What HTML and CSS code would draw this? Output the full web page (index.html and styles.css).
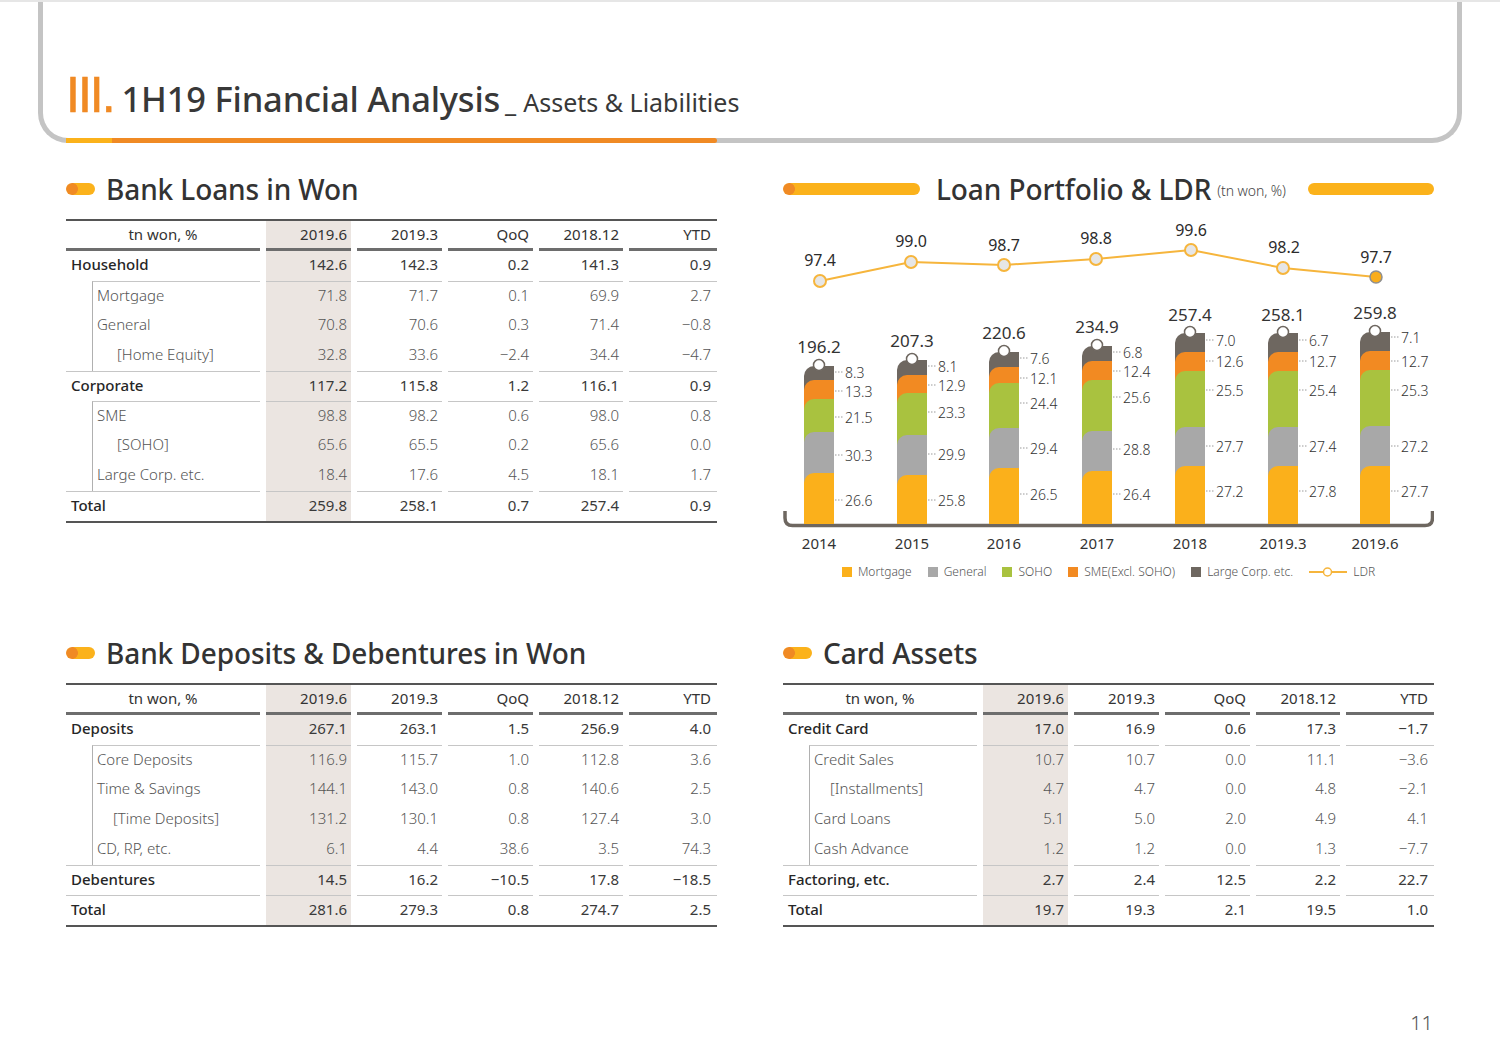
FILE: index.html
```html
<!DOCTYPE html>
<html lang="en">
<head>
<meta charset="utf-8">
<title>1H19 Financial Analysis - Assets &amp; Liabilities</title>
<link rel="stylesheet" href="styles.css">
</head>
<body>
<div class="page">
  <header class="frame">
    <div class="title">
      <span class="roman">III.</span>
      <span class="t-main">1H19 Financial Analysis</span>
      <span class="t-sub"><span class="us">_</span>Assets &amp; Liabilities</span>
    </div>
    <span class="accent"></span>
  </header>

  <main class="main">
    <section class="sec">
      <h2 class="sec-h"><span class="pill"></span>Bank Loans in Won</h2>
      <div class="tbl">
        <table>
          <colgroup><col class="w-l"><col class="w-a"><col class="w-a"><col class="w-a"><col class="w-b"><col class="w-c"></colgroup>
          <thead><tr><th class="lbl">tn won, %</th><th class="hl">2019.6</th><th>2019.3</th><th>QoQ</th><th>2018.12</th><th>YTD</th></tr></thead>
          <tbody>
            <tr class="b"><td class="lbl">Household</td><td class="hl">142.6</td><td>142.3</td><td>0.2</td><td>141.3</td><td>0.9</td></tr>
            <tr class="s gs"><td class="lbl in"><div class="ind">Mortgage</div></td><td class="hl">71.8</td><td>71.7</td><td>0.1</td><td>69.9</td><td>2.7</td></tr>
            <tr class="s"><td class="lbl in"><div class="ind">General</div></td><td class="hl">70.8</td><td>70.6</td><td>0.3</td><td>71.4</td><td>−0.8</td></tr>
            <tr class="s"><td class="lbl in"><div class="ind l2">[Home Equity]</div></td><td class="hl">32.8</td><td>33.6</td><td>−2.4</td><td>34.4</td><td>−4.7</td></tr>
            <tr class="b sep"><td class="lbl">Corporate</td><td class="hl">117.2</td><td>115.8</td><td>1.2</td><td>116.1</td><td>0.9</td></tr>
            <tr class="s gs"><td class="lbl in"><div class="ind">SME</div></td><td class="hl">98.8</td><td>98.2</td><td>0.6</td><td>98.0</td><td>0.8</td></tr>
            <tr class="s"><td class="lbl in"><div class="ind l2">[SOHO]</div></td><td class="hl">65.6</td><td>65.5</td><td>0.2</td><td>65.6</td><td>0.0</td></tr>
            <tr class="s"><td class="lbl in"><div class="ind">Large Corp. etc.</div></td><td class="hl">18.4</td><td>17.6</td><td>4.5</td><td>18.1</td><td>1.7</td></tr>
            <tr class="b sep"><td class="lbl">Total</td><td class="hl">259.8</td><td>258.1</td><td>0.7</td><td>257.4</td><td>0.9</td></tr>
          </tbody>
        </table>
      </div>
    </section>

    <section class="sec">
      <h2 class="sec-h chart-h"><span class="bar-l"></span><span class="ttl">Loan Portfolio &amp; LDR</span><span class="unit">(tn won, %)</span><span class="bar-r"></span></h2>
      <svg class="chart" width="651" height="353" viewBox="783 207 651 353" xmlns="http://www.w3.org/2000/svg">
        <path class="axis" d="M785 511V518Q785 525.5 792.5 525.5H1425Q1432.5 525.5 1432.5 518V511"/>

        <g transform="translate(804 0)">
          <path class="c5" d="M0 524V376A10 10 0 0 1 10 366H30V524Z"/>
          <path class="c4" d="M0 524V390A10 10 0 0 1 10 380H30V524Z"/>
          <path class="c3" d="M0 524V409A10 10 0 0 1 10 399H30V524Z"/>
          <path class="c2" d="M0 524V442A10 10 0 0 1 10 432H30V524Z"/>
          <path class="c1" d="M0 524V483A10 10 0 0 1 10 473H30V524Z"/>
          <circle class="knob" cx="15" cy="365" r="5.5"/>
          <path class="lead" d="M31 372H40M31 391H40M31 417H40M31 455H40M31 500H40"/>
          <text class="seg" x="41" y="372">8.3</text><text class="seg" x="41" y="391">13.3</text><text class="seg" x="41" y="417">21.5</text><text class="seg" x="41" y="455">30.3</text><text class="seg" x="41" y="500">26.6</text>
          <text class="tot" x="15" y="346">196.2</text>
          <text class="yr" x="15" y="543">2014</text>
        </g>
        <g transform="translate(897 0)">
          <path class="c5" d="M0 524V370A10 10 0 0 1 10 360H30V524Z"/>
          <path class="c4" d="M0 524V385A10 10 0 0 1 10 375H30V524Z"/>
          <path class="c3" d="M0 524V403A10 10 0 0 1 10 393H30V524Z"/>
          <path class="c2" d="M0 524V445A10 10 0 0 1 10 435H30V524Z"/>
          <path class="c1" d="M0 524V485A10 10 0 0 1 10 475H30V524Z"/>
          <circle class="knob" cx="15" cy="359" r="5.5"/>
          <path class="lead" d="M31 366H40M31 385H40M31 412H40M31 454H40M31 500H40"/>
          <text class="seg" x="41" y="366">8.1</text><text class="seg" x="41" y="385">12.9</text><text class="seg" x="41" y="412">23.3</text><text class="seg" x="41" y="454">29.9</text><text class="seg" x="41" y="500">25.8</text>
          <text class="tot" x="15" y="340">207.3</text>
          <text class="yr" x="15" y="543">2015</text>
        </g>
        <g transform="translate(989 0)">
          <path class="c5" d="M0 524V362A10 10 0 0 1 10 352H30V524Z"/>
          <path class="c4" d="M0 524V377A10 10 0 0 1 10 367H30V524Z"/>
          <path class="c3" d="M0 524V393A10 10 0 0 1 10 383H30V524Z"/>
          <path class="c2" d="M0 524V438A10 10 0 0 1 10 428H30V524Z"/>
          <path class="c1" d="M0 524V478A10 10 0 0 1 10 468H30V524Z"/>
          <circle class="knob" cx="15" cy="351" r="5.5"/>
          <path class="lead" d="M31 358H40M31 378H40M31 403H40M31 448H40M31 494H40"/>
          <text class="seg" x="41" y="358">7.6</text><text class="seg" x="41" y="378">12.1</text><text class="seg" x="41" y="403">24.4</text><text class="seg" x="41" y="448">29.4</text><text class="seg" x="41" y="494">26.5</text>
          <text class="tot" x="15" y="332">220.6</text>
          <text class="yr" x="15" y="543">2016</text>
        </g>
        <g transform="translate(1082 0)">
          <path class="c5" d="M0 524V356A10 10 0 0 1 10 346H30V524Z"/>
          <path class="c4" d="M0 524V371A10 10 0 0 1 10 361H30V524Z"/>
          <path class="c3" d="M0 524V390A10 10 0 0 1 10 380H30V524Z"/>
          <path class="c2" d="M0 524V441A10 10 0 0 1 10 431H30V524Z"/>
          <path class="c1" d="M0 524V481A10 10 0 0 1 10 471H30V524Z"/>
          <circle class="knob" cx="15" cy="345" r="5.5"/>
          <path class="lead" d="M31 352H40M31 371H40M31 397H40M31 449H40M31 494H40"/>
          <text class="seg" x="41" y="352">6.8</text><text class="seg" x="41" y="371">12.4</text><text class="seg" x="41" y="397">25.6</text><text class="seg" x="41" y="449">28.8</text><text class="seg" x="41" y="494">26.4</text>
          <text class="tot" x="15" y="326">234.9</text>
          <text class="yr" x="15" y="543">2017</text>
        </g>
        <g transform="translate(1175 0)">
          <path class="c5" d="M0 524V343A10 10 0 0 1 10 333H30V524Z"/>
          <path class="c4" d="M0 524V362A10 10 0 0 1 10 352H30V524Z"/>
          <path class="c3" d="M0 524V381A10 10 0 0 1 10 371H30V524Z"/>
          <path class="c2" d="M0 524V437A10 10 0 0 1 10 427H30V524Z"/>
          <path class="c1" d="M0 524V476A10 10 0 0 1 10 466H30V524Z"/>
          <circle class="knob" cx="15" cy="332" r="5.5"/>
          <path class="lead" d="M31 340H40M31 361H40M31 390H40M31 446H40M31 491H40"/>
          <text class="seg" x="41" y="340">7.0</text><text class="seg" x="41" y="361">12.6</text><text class="seg" x="41" y="390">25.5</text><text class="seg" x="41" y="446">27.7</text><text class="seg" x="41" y="491">27.2</text>
          <text class="tot" x="15" y="314">257.4</text>
          <text class="yr" x="15" y="543">2018</text>
        </g>
        <g transform="translate(1268 0)">
          <path class="c5" d="M0 524V343A10 10 0 0 1 10 333H30V524Z"/>
          <path class="c4" d="M0 524V362A10 10 0 0 1 10 352H30V524Z"/>
          <path class="c3" d="M0 524V381A10 10 0 0 1 10 371H30V524Z"/>
          <path class="c2" d="M0 524V437A10 10 0 0 1 10 427H30V524Z"/>
          <path class="c1" d="M0 524V476A10 10 0 0 1 10 466H30V524Z"/>
          <circle class="knob" cx="15" cy="332" r="5.5"/>
          <path class="lead" d="M31 340H40M31 361H40M31 390H40M31 446H40M31 491H40"/>
          <text class="seg" x="41" y="340">6.7</text><text class="seg" x="41" y="361">12.7</text><text class="seg" x="41" y="390">25.4</text><text class="seg" x="41" y="446">27.4</text><text class="seg" x="41" y="491">27.8</text>
          <text class="tot" x="15" y="314">258.1</text>
          <text class="yr" x="15" y="543">2019.3</text>
        </g>
        <g transform="translate(1360 0)">
          <path class="c5" d="M0 524V342A10 10 0 0 1 10 332H30V524Z"/>
          <path class="c4" d="M0 524V361A10 10 0 0 1 10 351H30V524Z"/>
          <path class="c3" d="M0 524V380A10 10 0 0 1 10 370H30V524Z"/>
          <path class="c2" d="M0 524V436A10 10 0 0 1 10 426H30V524Z"/>
          <path class="c1" d="M0 524V476A10 10 0 0 1 10 466H30V524Z"/>
          <circle class="knob" cx="15" cy="331" r="5.5"/>
          <path class="lead" d="M31 337H40M31 361H40M31 390H40M31 446H40M31 491H40"/>
          <text class="seg" x="41" y="337">7.1</text><text class="seg" x="41" y="361">12.7</text><text class="seg" x="41" y="390">25.3</text><text class="seg" x="41" y="446">27.2</text><text class="seg" x="41" y="491">27.7</text>
          <text class="tot" x="15" y="312">259.8</text>
          <text class="yr" x="15" y="543">2019.6</text>
        </g>

        <polyline class="ldr" points="820,281 911,262 1004,265 1096,259 1191,250 1283,268 1376,277"/>
        <circle class="pt" cx="820" cy="281" r="6"/>
        <circle class="pt" cx="911" cy="262" r="6"/>
        <circle class="pt" cx="1004" cy="265" r="6"/>
        <circle class="pt" cx="1096" cy="259" r="6"/>
        <circle class="pt" cx="1191" cy="250" r="6"/>
        <circle class="pt" cx="1283" cy="268" r="6"/>
        <circle class="pt last" cx="1376" cy="277" r="6"/>
        <text class="ldr-t" x="820" y="260">97.4</text>
        <text class="ldr-t" x="911" y="241">99.0</text>
        <text class="ldr-t" x="1004" y="245">98.7</text>
        <text class="ldr-t" x="1096" y="238">98.8</text>
        <text class="ldr-t" x="1191" y="230">99.6</text>
        <text class="ldr-t" x="1284" y="247">98.2</text>
        <text class="ldr-t" x="1376" y="257">97.7</text>
      </svg>
      <div class="legend">
        <span class="li"><span class="sw c1b"></span>Mortgage</span>
        <span class="li"><span class="sw c2b"></span>General</span>
        <span class="li"><span class="sw c3b"></span>SOHO</span>
        <span class="li"><span class="sw c4b"></span>SME(Excl. SOHO)</span>
        <span class="li"><span class="sw c5b"></span>Large Corp. etc.</span>
        <span class="li"><svg class="lg-ldr" width="38" height="10" viewBox="0 0 38 10"><path d="M0 5H38"/><circle cx="18.5" cy="5" r="4"/></svg>LDR</span>
      </div>
    </section>

    <section class="sec">
      <h2 class="sec-h"><span class="pill"></span>Bank Deposits &amp; Debentures in Won</h2>
      <div class="tbl">
        <table>
          <colgroup><col class="w-l"><col class="w-a"><col class="w-a"><col class="w-a"><col class="w-b"><col class="w-c"></colgroup>
          <thead><tr><th class="lbl">tn won, %</th><th class="hl">2019.6</th><th>2019.3</th><th>QoQ</th><th>2018.12</th><th>YTD</th></tr></thead>
          <tbody>
            <tr class="b"><td class="lbl">Deposits</td><td class="hl">267.1</td><td>263.1</td><td>1.5</td><td>256.9</td><td>4.0</td></tr>
            <tr class="s gs"><td class="lbl in"><div class="ind">Core Deposits</div></td><td class="hl">116.9</td><td>115.7</td><td>1.0</td><td>112.8</td><td>3.6</td></tr>
            <tr class="s"><td class="lbl in"><div class="ind">Time &amp; Savings</div></td><td class="hl">144.1</td><td>143.0</td><td>0.8</td><td>140.6</td><td>2.5</td></tr>
            <tr class="s"><td class="lbl in"><div class="ind l2s">[Time Deposits]</div></td><td class="hl">131.2</td><td>130.1</td><td>0.8</td><td>127.4</td><td>3.0</td></tr>
            <tr class="s"><td class="lbl in"><div class="ind">CD, RP, etc.</div></td><td class="hl">6.1</td><td>4.4</td><td>38.6</td><td>3.5</td><td>74.3</td></tr>
            <tr class="b sep"><td class="lbl">Debentures</td><td class="hl">14.5</td><td>16.2</td><td>−10.5</td><td>17.8</td><td>−18.5</td></tr>
            <tr class="b sep"><td class="lbl">Total</td><td class="hl">281.6</td><td>279.3</td><td>0.8</td><td>274.7</td><td>2.5</td></tr>
          </tbody>
        </table>
      </div>
    </section>

    <section class="sec">
      <h2 class="sec-h"><span class="pill"></span>Card Assets</h2>
      <div class="tbl">
        <table>
          <colgroup><col class="w-l"><col class="w-a"><col class="w-a"><col class="w-a"><col class="w-b"><col class="w-c"></colgroup>
          <thead><tr><th class="lbl">tn won, %</th><th class="hl">2019.6</th><th>2019.3</th><th>QoQ</th><th>2018.12</th><th>YTD</th></tr></thead>
          <tbody>
            <tr class="b"><td class="lbl">Credit Card</td><td class="hl">17.0</td><td>16.9</td><td>0.6</td><td>17.3</td><td>−1.7</td></tr>
            <tr class="s gs"><td class="lbl in"><div class="ind">Credit Sales</div></td><td class="hl">10.7</td><td>10.7</td><td>0.0</td><td>11.1</td><td>−3.6</td></tr>
            <tr class="s"><td class="lbl in"><div class="ind l2s">[Installments]</div></td><td class="hl">4.7</td><td>4.7</td><td>0.0</td><td>4.8</td><td>−2.1</td></tr>
            <tr class="s"><td class="lbl in"><div class="ind">Card Loans</div></td><td class="hl">5.1</td><td>5.0</td><td>2.0</td><td>4.9</td><td>4.1</td></tr>
            <tr class="s"><td class="lbl in"><div class="ind">Cash Advance</div></td><td class="hl">1.2</td><td>1.2</td><td>0.0</td><td>1.3</td><td>−7.7</td></tr>
            <tr class="b sep"><td class="lbl">Factoring, etc.</td><td class="hl">2.7</td><td>2.4</td><td>12.5</td><td>2.2</td><td>22.7</td></tr>
            <tr class="b sep"><td class="lbl">Total</td><td class="hl">19.7</td><td>19.3</td><td>2.1</td><td>19.5</td><td>1.0</td></tr>
          </tbody>
        </table>
      </div>
    </section>
  </main>

  <footer class="pno">11</footer>
</div>
</body>
</html>
```

FILE: styles.css
```css
* { box-sizing: border-box; }

html, body {
  margin: 0;
  padding: 0;
  background: #ffffff;
}

body {
  font-family: "Noto Sans", "Open Sans", sans-serif;
  color: #333333;
}

.page {
  width: 1500px;
  height: 1061px;
  overflow: hidden;
  border-top: 2px solid #e6e6e6;
  background: #ffffff;
}

/* ---------- header frame ---------- */
.frame {
  position: relative;
  margin: -2px 38px 0;
  height: 143px;
  border: 5px solid #c4c4c4;
  border-top: 0;
  border-radius: 0 0 30px 30px;
  display: flex;
  align-items: flex-end;
  padding: 0 0 18px 23px;
}

.title {
  display: flex;
  align-items: baseline;
  line-height: 1;
  color: #383838;
}

.roman {
  font-family: "Liberation Sans", Arial, sans-serif;
  font-size: 50px;
  font-weight: 400;
  letter-spacing: -2px;
  color: #f08a24;
  margin-right: 8px;
  -webkit-text-stroke: 0.6px #f08a24;
}

.t-main {
  font-size: 34.5px;
  font-weight: 500;
  letter-spacing: -0.2px;
}

.t-sub {
  font-size: 25px;
  font-weight: 400;
  margin-left: 5px;
}

.t-sub .us {
  margin-right: 7px;
}

.accent {
  position: absolute;
  left: 23px;
  bottom: -5px;
  width: 651px;
  height: 5px;
  border-radius: 0 3px 3px 0;
  background: linear-gradient(to right, #fbb21b 0, #fbb21b 46px, #f08a24 46px, #f08a24 100%);
}

/* ---------- main grid ---------- */
.main {
  display: grid;
  grid-template-columns: 651px 651px;
  grid-template-rows: 464px auto;
  column-gap: 66px;
  padding: 28px 66px 0;
}

.sec-h {
  margin: 0;
  height: 36px;
  display: flex;
  align-items: center;
  gap: 11px;
  font-size: 28px;
  font-weight: 500;
  color: #333333;
  letter-spacing: -0.1px;
  white-space: nowrap;
}

.pill {
  flex: 0 0 29px;
  height: 12px;
  border-radius: 6px;
  background: radial-gradient(circle at 6px 6px, #f08a24 0, #f08a24 5.6px, rgba(240,138,36,0) 6.2px), #fbb21b;
}

/* ---------- tables ---------- */
.tbl {
  margin-top: 12px;
  border-top: 2px solid #555555;
  border-bottom: 2px solid #555555;
}

.tbl table {
  width: 663px;
  margin: 0 -6px;
  border-collapse: separate;
  border-spacing: 6px 0;
  table-layout: fixed;
}

.w-l { width: 194px; }
.w-a { width: 85px; }
.w-b { width: 84px; }
.w-c { width: 88px; }

th, td {
  height: 30px;
  padding: 0 4px 4px 0;
  text-align: right;
  font-size: 15px;
  white-space: nowrap;
  vertical-align: middle;
}

th {
  font-weight: 400;
  color: #333333;
  border-bottom: 3px solid #6d6d6d;
  padding-bottom: 2px;
}

th:last-child, td:last-child { padding-right: 6px; }

th.lbl { text-align: center; padding-right: 0; }

td.lbl { text-align: left; padding-left: 5px; }

.hl { background: #ebe5e1; }

tr.b td { color: #3a3a3a; font-weight: 400; }
tr.b td.lbl { font-weight: 500; color: #262626; }

tr.s td { color: #555555; font-weight: 300; }

tr.sep td { border-top: 1px solid #c6c6c6; }
tr.gs td { border-top: 1px solid #c6c6c6; }
tr.gs td.lbl { border-top: 0; }

td.lbl.in { padding: 0; }

.ind {
  margin-left: 26px;
  height: 30px;
  padding: 0 0 4px 4px;
  border-left: 1px solid #b0b0b0;
  display: flex;
  align-items: center;
}

tr.gs .ind { border-top: 1px solid #c6c6c6; }

.ind.l2 { padding-left: 24px; }
.ind.l2s { padding-left: 20px; }

/* ---------- chart heading ---------- */
.chart-h { gap: 0; }

.bar-l {
  flex: 0 0 137px;
  height: 12px;
  border-radius: 6px;
  margin-right: 16px;
  background: radial-gradient(circle at 6px 6px, #f08a24 0, #f08a24 5.6px, rgba(240,138,36,0) 6.2px), #fbb21b;
}

.bar-r {
  flex: 0 0 126px;
  height: 12px;
  border-radius: 6px;
  margin-left: auto;
  background: #fbb21b;
}

.unit {
  font-size: 14px;
  font-weight: 300;
  color: #444444;
  margin-left: 6px;
  align-self: center;
  padding-top: 2px;
}

/* ---------- chart svg ---------- */
.chart {
  display: block;
}

.c1 { fill: #fbb01b; }
.c2 { fill: #a8a8a8; }
.c3 { fill: #a9c23f; }
.c4 { fill: #f28a22; }
.c5 { fill: #6e6760; }

.knob {
  fill: #ffffff;
  stroke: #6e6760;
  stroke-width: 1.5;
}

.lead {
  fill: none;
  stroke: #9a9a9a;
  stroke-width: 1;
  stroke-dasharray: 1.5 1.5;
}

.axis {
  fill: none;
  stroke: #6e6760;
  stroke-width: 3.5;
}

.chart text {
  font-family: "Noto Sans", "Open Sans", sans-serif;
  dominant-baseline: central;
  fill: #333333;
}

.seg {
  font-size: 14px;
  font-weight: 300;
}

.tot {
  font-size: 17px;
  font-weight: 400;
  text-anchor: middle;
  fill: #222222;
}

.yr {
  font-size: 15px;
  font-weight: 400;
  text-anchor: middle;
}

.ldr {
  fill: none;
  stroke: #f6b53c;
  stroke-width: 2;
}

.pt {
  fill: #e6e6e6;
  stroke: #f6b53c;
  stroke-width: 2;
}

.pt.last {
  fill: #f9ad1c;
  stroke: #8f8f8f;
  stroke-width: 1.5;
}

.chart .ldr-t {
  font-size: 16px;
  font-weight: 400;
  text-anchor: middle;
  fill: #2b2b2b;
}

/* ---------- legend ---------- */
.legend {
  margin-top: 4px;
  display: flex;
  justify-content: center;
  align-items: center;
  gap: 16px;
  font-size: 12px;
  font-weight: 300;
  color: #555555;
  line-height: 16px;
  white-space: nowrap;
}

.li {
  display: flex;
  align-items: center;
  gap: 6px;
}

.sw {
  width: 10px;
  height: 10px;
  display: inline-block;
}

.c1b { background: #fbb01b; }
.c2b { background: #a8a8a8; }
.c3b { background: #a9c23f; }
.c4b { background: #f28a22; }
.c5b { background: #6e6760; }

.lg-ldr path { stroke: #f6b53c; stroke-width: 2; fill: none; }
.lg-ldr circle { fill: #ffffff; stroke: #f6b53c; stroke-width: 1.5; }

/* ---------- page number ---------- */
.pno {
  margin-top: 84px;
  padding-right: 67px;
  text-align: right;
  font-size: 20px;
  font-weight: 300;
  line-height: 24px;
  color: #555555;
}
```
